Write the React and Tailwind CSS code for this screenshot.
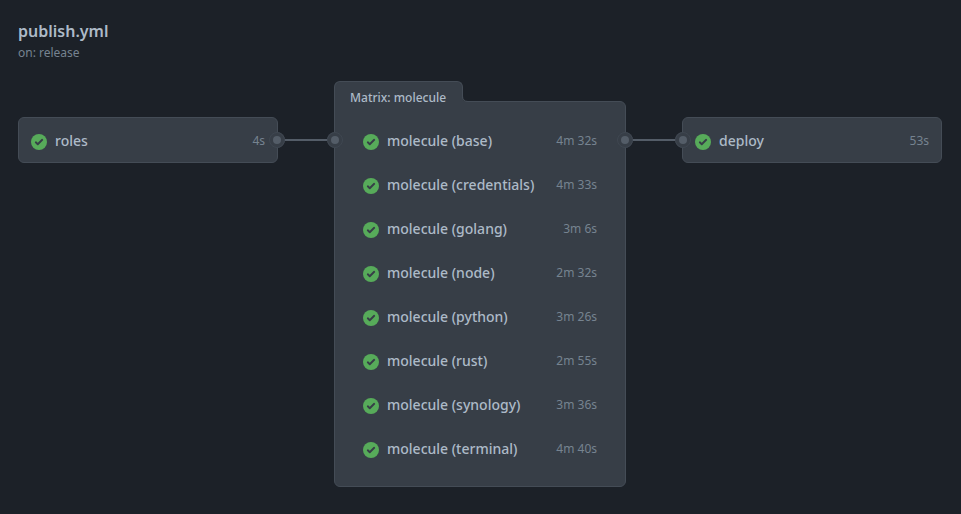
import React from "react";

const matrixJobs = [
  { name: "molecule (base)", time: "4m 32s" },
  { name: "molecule (credentials)", time: "4m 33s" },
  { name: "molecule (golang)", time: "3m 6s" },
  { name: "molecule (node)", time: "2m 32s" },
  { name: "molecule (python)", time: "3m 26s" },
  { name: "molecule (rust)", time: "2m 55s" },
  { name: "molecule (synology)", time: "3m 36s" },
  { name: "molecule (terminal)", time: "4m 40s" },
];

function SuccessIcon() {
  return (
    <svg viewBox="0 0 16 16" className="mt-0.5 size-4 shrink-0" aria-hidden="true">
      <circle cx="8" cy="8" r="8" fill="#57ab5a" />
      <path
        d="M4.8 8.3 6.75 10.2 11.2 5.8"
        fill="none"
        stroke="#373e47"
        strokeWidth="1.9"
        strokeLinecap="round"
        strokeLinejoin="round"
      />
    </svg>
  );
}

function Job({ name, time }) {
  return (
    <div className="flex h-11 items-center px-3">
      <SuccessIcon />
      <span className="ml-2 flex-1 whitespace-nowrap text-sm font-medium text-[#adbac7]">{name}</span>
      <span className="text-xs text-[#768390]">{time}</span>
    </div>
  );
}

// Connection point on the edge of a card
function Port() {
  return (
    <svg viewBox="0 0 16 16" className="size-4 shrink-0" aria-hidden="true">
      <circle cx="8" cy="8" r="8" fill="#373e47" />
      <circle cx="8" cy="8" r="7.5" fill="none" stroke="#3f4751" />
      <circle cx="8" cy="8" r="4" fill="#545d68" />
    </svg>
  );
}

function Connector() {
  return (
    <div className="relative z-10 -mx-[9px] mt-[51px] flex h-4 items-center">
      <Port />
      <div className="h-0.5 w-[42px] bg-[#545d68]" />
      <Port />
    </div>
  );
}

function Card({ children }) {
  return (
    <div className="mt-9 h-[46px] w-[260px] rounded-md border border-[#444c56] bg-[#373e47] pt-px">
      {children}
    </div>
  );
}

export default function App() {
  return (
    <main className="h-[514px] w-[961px] overflow-hidden bg-[#1c2128] pl-[18px] pt-5 font-['Noto_Sans',sans-serif]">
      <header className="h-[61px]">
        <h1 className="text-base leading-[22px] font-semibold text-[#adbac7]">publish.yml</h1>
        <p className="mt-0.5 text-xs leading-[18px] text-[#768390]">on: release</p>
      </header>
      <div className="flex items-start">
        <Card>
          <Job name="roles" time="4s" />
        </Card>
        <Connector />
        <section className="w-[292px]">
          <div className="relative z-10 h-[21px] w-[129px] rounded-t-md border border-b-0 border-[#444c56] bg-[#373e47] pl-[15px] pt-[7px] text-xs leading-[18px] font-medium whitespace-nowrap text-[#adbac7]">
            Matrix: molecule
            <svg viewBox="0 0 6 6" className="absolute -right-[6px] bottom-0 size-1.5" aria-hidden="true">
              <path d="M0 0C0 3.5 2 5.5 6 5.5V6H0Z" fill="#373e47" />
              <path d="M.5 0C.5 3.5 2.5 5.5 6 5.5" fill="none" stroke="#444c56" />
            </svg>
          </div>
          <div className="-mt-px h-[386px] rounded-md rounded-tl-none border border-[#444c56] bg-[#373e47] px-4 pt-[17px]">
            {matrixJobs.map((job) => (
              <Job key={job.name} {...job} />
            ))}
          </div>
        </section>
        <Connector />
        <Card>
          <Job name="deploy" time="53s" />
        </Card>
      </div>
    </main>
  );
}
